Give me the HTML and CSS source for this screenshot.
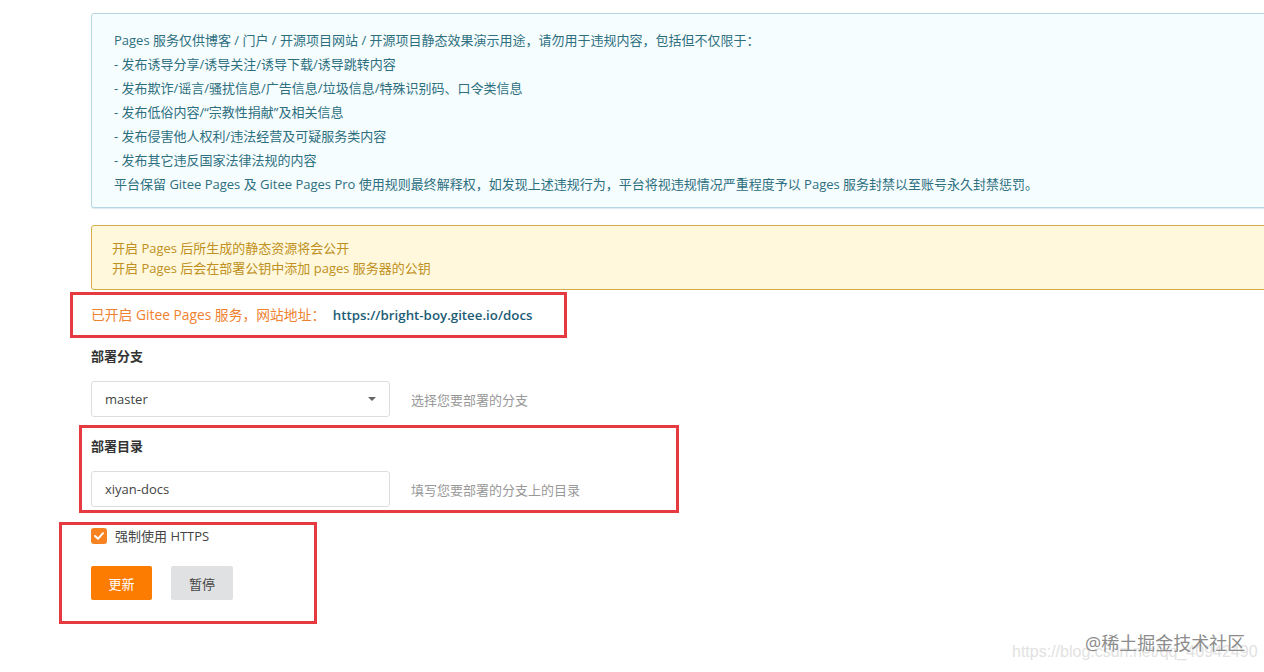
FILE: index.html
```html
<!DOCTYPE html>
<html lang="zh-CN">
<head>
  <meta charset="UTF-8" />
  <meta name="viewport" content="width=device-width, initial-scale=1.0"/>
  <title>Gitee Pages 服务</title>
  <link rel="stylesheet" href="styles.css">
</head>
<body>

<div class="page">
  <div class="notice info">
    <div>Pages 服务仅供博客 / 门户 / 开源项目网站 / 开源项目静态效果演示用途，请勿用于违规内容，包括但不仅限于：</div>
    <div>- 发布诱导分享/诱导关注/诱导下载/诱导跳转内容</div>
    <div>- 发布欺诈/谣言/骚扰信息/广告信息/垃圾信息/特殊识别码、口令类信息</div>
    <div>- 发布低俗内容/“宗教性捐献”及相关信息</div>
    <div>- 发布侵害他人权利/违法经营及可疑服务类内容</div>
    <div>- 发布其它违反国家法律法规的内容</div>
    <div>平台保留 Gitee Pages 及 Gitee Pages Pro 使用规则最终解释权，如发现上述违规行为，平台将视违规情况严重程度予以 Pages 服务封禁以至账号永久封禁惩罚。</div>
  </div>

  <div class="notice warn">
    <div>开启 Pages 后所生成的静态资源将会公开</div>
    <div>开启 Pages 后会在部署公钥中添加 pages 服务器的公钥</div>
  </div>

  <div class="status">
    已开启 Gitee Pages 服务，网站地址：
    <a class="site-link" href="#">https://bright-boy.gitee.io/docs</a>
  </div>

  <div class="field">
    <div class="field-label">部署分支</div>
    <div class="field-row">
      <div class="select">
        <span>master</span>
        <span class="caret"></span>
      </div>
      <span class="hint">选择您要部署的分支</span>
    </div>
  </div>

  <div class="field">
    <div class="field-label">部署目录</div>
    <div class="field-row">
      <input class="text-input" type="text" value="xiyan-docs">
      <span class="hint">填写您要部署的分支上的目录</span>
    </div>
  </div>

  <label class="check">
    <span class="check-box">
      <svg width="10" height="8" viewBox="0 0 10 8"><path d="M1 4 L4 6.8 L9 1.2" fill="none" stroke="#fff" stroke-width="2" stroke-linecap="round" stroke-linejoin="round"/></svg>
    </span>
    强制使用 HTTPS
  </label>

  <div class="actions">
    <button class="btn btn-orange">更新</button>
    <button class="btn btn-gray">暂停</button>
  </div>

  <!-- annotation frames from the screenshot -->
  <div class="mark mark-status"></div>
  <div class="mark mark-dir"></div>
  <div class="mark mark-actions"></div>

  <div class="watermark">@稀土掘金技术社区</div>
  <div class="watermark-url">https://blog.csdn.net/qq_40942490</div>
</div>

</body>
</html>
```

FILE: styles.css
```css
* {
  box-sizing: border-box;
  font-family: "Open Sans", "Noto Sans CJK SC", sans-serif;
}

body {
  margin: 0;
  padding: 0;
  background: #fff;
  overflow: hidden;
  color: #333;
  font-size: 13px;
}

.page {
  position: relative;
  min-height: 672px;
  padding-left: 91px;
  padding-top: 13px;
  margin-right: -40px;
}

.notice {
  border: 1px solid;
  border-radius: 3px;
}

.notice.info {
  background: #f5fdff;
  border-color: #b5d7e2;
  color: #2d6f7e;
  line-height: 24px;
  padding: 14px 22px 11px;
  box-shadow: 0 1px 1px rgba(120, 170, 190, 0.25);
}

.notice.warn {
  margin-top: 17px;
  background: #fff8dc;
  border-color: #d6ac4a;
  color: #c09022;
  line-height: 20px;
  padding: 12px 20px 11px;
}

.status {
  margin-top: 15px;
  line-height: 20px;
  font-size: 13.8px;
  color: #f0812f;
}

.site-link {
  color: #1d5c76;
  font-size: 13.3px;
  font-weight: 600;
  text-decoration: none;
  margin-left: 4px;
}

.field-label {
  font-weight: bold;
  line-height: 20px;
  margin-top: 21px;
  color: #333;
}

.field + .field .field-label {
  margin-top: 19px;
}

.field-row {
  display: flex;
  align-items: center;
  gap: 21px;
  margin-top: 15px;
}

.select,
.text-input {
  width: 299px;
  height: 36px;
  border: 1px solid #ddd;
  border-radius: 3px;
  background: #fff;
  padding: 0 13px;
  font-size: 13px;
  color: #444;
}

.select {
  display: flex;
  align-items: center;
  justify-content: space-between;
}

.caret {
  width: 0;
  height: 0;
  border-left: 4px solid transparent;
  border-right: 4px solid transparent;
  border-top: 4px solid #666;
}

.text-input {
  outline: none;
}

.hint {
  color: #999;
}

.check {
  display: flex;
  align-items: center;
  gap: 8px;
  margin-top: 20px;
  line-height: 18px;
  color: #444;
}

.check-box {
  width: 16px;
  height: 16px;
  border-radius: 3px;
  background: #f8821f;
  display: flex;
  align-items: center;
  justify-content: center;
}

.actions {
  display: flex;
  gap: 19px;
  margin-top: 21px;
}

.btn {
  height: 34px;
  border: none;
  border-radius: 2px;
  padding: 0;
  font-size: 13px;
  cursor: pointer;
}

.btn-orange {
  width: 61px;
  background: #fb7c00;
  color: #fff;
}

.btn-gray {
  width: 62px;
  background: #e0e1e2;
  color: #444;
}

.mark {
  position: absolute;
  border: 3px solid #e53a3f;
}

.mark-status {
  left: 70px;
  top: 292px;
  width: 497px;
  height: 46px;
}

.mark-dir {
  left: 79px;
  top: 425px;
  width: 600px;
  height: 88px;
}

.mark-actions {
  left: 59px;
  top: 522px;
  width: 258px;
  height: 102px;
}

.watermark {
  position: absolute;
  left: 1085px;
  top: 629px;
  font-size: 18px;
  color: #8c8c8c;
  z-index: 2;
}

.watermark-url {
  position: absolute;
  left: 1012px;
  top: 643px;
  font-family: "Liberation Sans", sans-serif;
  font-size: 16px;
  color: #e2e2e2;
  z-index: 1;
}
```
